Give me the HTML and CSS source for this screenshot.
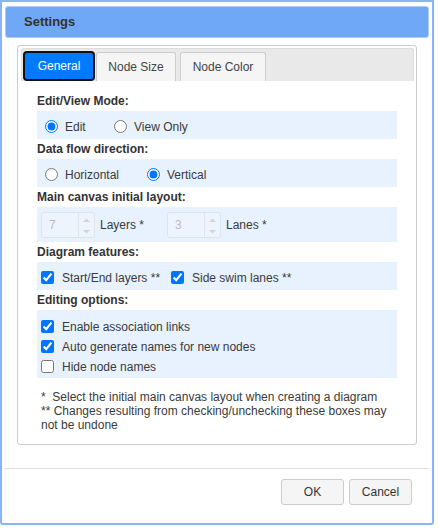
FILE: index.html
```html
<!DOCTYPE html>
<html>
<head>
<meta charset="utf-8">
<link rel="stylesheet" href="styles.css">
</head>
<body>
<div class="dialog">
  <div class="title">Settings</div>
  <div class="panel">
    <div class="tabs">
      <div class="tab active">General</div>
      <div class="tab t2">Node Size</div>
      <div class="tab t3">Node Color</div>
    </div>
    <div class="content">
      <div class="label">Edit/View Mode:</div>
      <div class="row radios">
        <label class="opt w-edit"><input type="radio" name="mode" checked><span>Edit</span></label>
        <label class="opt"><input type="radio" name="mode"><span>View Only</span></label>
      </div>
      <div class="label">Data flow direction:</div>
      <div class="row radios">
        <label class="opt w-horiz"><input type="radio" name="dir"><span>Horizontal</span></label>
        <label class="opt"><input type="radio" name="dir" checked><span>Vertical</span></label>
      </div>
      <div class="label">Main canvas initial layout:</div>
      <div class="row spins">
        <div class="spin-group w-layers">
          <div class="spin"><span class="val">7</span><span class="arrows"><svg width="15" height="24" viewBox="0 0 15 24"><path d="M4 9 L7.5 5.5 L11 9 Z" fill="#d0d4d8"/><path d="M4 17 L7.5 20.5 L11 17 Z" fill="#d0d4d8"/></svg></span></div>
          <span>Layers *</span>
        </div>
        <div class="spin-group">
          <div class="spin"><span class="val">3</span><span class="arrows"><svg width="15" height="24" viewBox="0 0 15 24"><path d="M4 9 L7.5 5.5 L11 9 Z" fill="#d0d4d8"/><path d="M4 17 L7.5 20.5 L11 17 Z" fill="#d0d4d8"/></svg></span></div>
          <span>Lanes *</span>
        </div>
      </div>
      <div class="label">Diagram features:</div>
      <div class="row checks">
        <label class="opt w-start"><input type="checkbox" checked><span>Start/End layers **</span></label>
        <label class="opt"><input type="checkbox" checked><span>Side swim lanes **</span></label>
      </div>
      <div class="label">Editing options:</div>
      <div class="row list">
        <label class="opt"><input type="checkbox" checked><span>Enable association links</span></label>
        <label class="opt"><input type="checkbox" checked><span>Auto generate names for new nodes</span></label>
        <label class="opt"><input type="checkbox"><span>Hide node names</span></label>
      </div>
      <div class="notes">
        <div>*&nbsp; Select the initial main canvas layout when creating a diagram</div>
        <div>** Changes resulting from checking/unchecking these boxes may not be undone</div>
      </div>
    </div>
  </div>
  <div class="footer">
    <button class="btn">OK</button>
    <button class="btn">Cancel</button>
  </div>
</div>
</body>
</html>
```
FILE: styles.css
```css
html, body {
  margin: 0;
  padding: 0;
  background: #ffffff;
}
body {
  font-family: "Liberation Sans", Arial, sans-serif;
  font-size: 12px;
  color: #333;
}
.dialog {
  width: 434px;
  height: 525px;
  box-sizing: border-box;
  border: 2px solid #8ab4f8;
  border-radius: 0 0 3px 3px;
  padding: 4px 3px 0;
  display: flex;
  flex-direction: column;
  background: #fff;
}
.title {
  height: 32px;
  box-sizing: border-box;
  background: #70a8f8;
  border: 1px solid #b2cbef;
  border-radius: 3px;
  padding-left: 18px;
  font-size: 13px;
  font-weight: bold;
  line-height: 30px;
  color: #333;
}
.panel {
  width: 400px;
  box-sizing: border-box;
  margin: 7px 0 0 12px;
  border: 1px solid #ccc;
  border-radius: 3px;
  padding: 2px 2px 0 3px;
}
.tabs {
  height: 32px;
  box-sizing: content-box;
  background: #e9e9e9;
  border: 1px solid #ddd;
  border-bottom: none;
  border-radius: 3px 3px 0 0;
  padding: 0 1px;
  display: flex;
  align-items: flex-end;
}
.tab {
  height: 29px;
  box-sizing: border-box;
  background: #f5f5f5;
  border: 1px solid #ccc;
  border-bottom: none;
  border-radius: 3px 3px 0 0;
  line-height: 28px;
  text-align: center;
  color: #444;
}
.tab.active {
  width: 72px;
  height: 30px;
  background: #007bff;
  border: 2px solid #111;
  border-radius: 4px;
  color: #fff;
  line-height: 26px;
}
.tab.t2 { width: 80px; margin-left: 1px; }
.tab.t3 { width: 86px; margin-left: 4px; }
.content {
  padding: 10px 0 12px 16px;
  width: 360px;
}
.label {
  font-weight: bold;
  line-height: 20px;
  color: #333;
}
.row {
  background: #e8f2fe;
  display: flex;
  align-items: center;
  box-sizing: border-box;
}
.radios {
  height: 28px;
  padding: 2px 0 0 8px;
}
.checks {
  height: 28px;
  padding: 2px 0 0 4px;
}
.opt {
  display: flex;
  align-items: center;
  gap: 7px;
  white-space: nowrap;
  color: #3a3a3a;
}
.opt span {
  padding-top: 2px;
}
.opt input {
  margin: 0;
  width: 13px;
  height: 13px;
}
.checks .opt, .list .opt { gap: 8px; }
.w-edit { width: 69px; }
.w-horiz { width: 102px; }
.w-start { width: 130px; }
.spins {
  height: 35px;
  padding-left: 4px;
}
.spin-group {
  display: flex;
  align-items: center;
  gap: 5px;
  color: #3a3a3a;
}
.w-layers { width: 126px; }
.spin {
  width: 54px;
  height: 26px;
  box-sizing: border-box;
  border: 1px solid #dce4ee;
  border-radius: 3px;
  background: #edf4fe;
  display: flex;
}
.spin .val {
  flex: 1;
  padding-left: 7px;
  line-height: 24px;
  color: #bcbcbc;
}
.spin .arrows {
  width: 15px;
  border-left: 1px solid #dce4ee;
  display: flex;
}
.list {
  height: 68px;
  flex-direction: column;
  align-items: stretch;
  padding: 6px 0 2px 4px;
}
.list .opt {
  height: 20px;
}
.notes {
  margin-top: 12px;
  padding-left: 4px;
  line-height: 14px;
  color: #3a3a3a;
  padding-right: 8px;
}
.footer {
  margin-top: 23px;
  border-top: 1px solid #ddd;
  padding: 10px 17px 0 0;
  display: flex;
  justify-content: flex-end;
  gap: 5px;
}
.btn {
  width: 63px;
  height: 26px;
  box-sizing: border-box;
  background: #f5f5f5;
  border: 1px solid #ccc;
  border-radius: 3px;
  font-family: "Liberation Sans", Arial, sans-serif;
  font-size: 12px;
  color: #333;
  padding: 0;
}
```
